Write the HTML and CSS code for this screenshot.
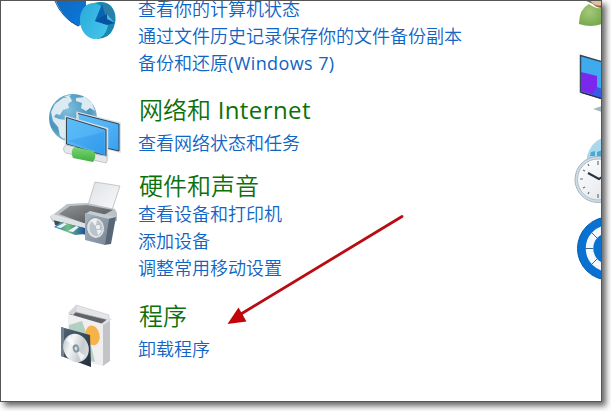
FILE: index.html
```html
<!DOCTYPE html>
<html lang="zh-CN">
<head>
    <meta charset="UTF-8">
    <title>控制面板</title>
    <link rel="stylesheet" href="styles.css">
</head>
<body>
    <div class="window">
        <div class="categories">
            <section class="category system">
                <svg class="icon" width="84" height="48" viewBox="44 -5 84 48">
                    <defs>
                        <linearGradient id="pie" x1="0" y1="0" x2="1" y2="1"><stop offset="0" stop-color="#1268bd"/><stop offset="1" stop-color="#0878dc"/></linearGradient>
                        <linearGradient id="disk" x1="0" y1="0" x2="1" y2="1"><stop offset="0" stop-color="#28a9d8"/><stop offset="1" stop-color="#48c7ed"/></linearGradient>
                    </defs>
                    <path d="M54-5Q61 17 78 25L86 18V-5Z" fill="url(#pie)"/>
                    <path d="M55 0Q62 17 78 25l3-2" fill="none" stroke="#0d529e"/>
                    <path d="M94 2Q105-1 111 5Q117 12 115 22Q113 34 103 37L97 38Z" fill="#1688b2"/>
                    <ellipse cx="94" cy="20" rx="14" ry="18" fill="url(#disk)" transform="rotate(-8 94 20)"/>
                    <path d="M95 20L102 3L107 7L106 23Z" fill="#0963b3"/>
                    <path d="M102 3Q112 3 115 19L106 17Z" fill="#2c7da7"/>
                    <path d="M95 20L107 13L115 22L107 24Z" fill="#0753a0"/>
                    <path d="M107 13L115 22L107 18Z" fill="#47b8dc"/>
                </svg>
                <ul class="links">
                    <li><a>查看你的计算机状态</a></li>
                    <li><a>通过文件历史记录保存你的文件备份副本</a></li>
                    <li><a>备份和还原<span class="latin">(Windows 7)</span></a></li>
                </ul>
            </section>

            <section class="category network">
                <svg class="icon" width="84" height="76" viewBox="44 91 84 76">
                    <defs>
                        <radialGradient id="globe" cx=".38" cy=".32" r=".72"><stop offset="0" stop-color="#7fc0de"/><stop offset=".65" stop-color="#4a94bd"/><stop offset="1" stop-color="#9cc2d5"/></radialGradient>
                        <linearGradient id="screen" x1="0" y1="0" x2="1" y2="1"><stop offset="0" stop-color="#5cbdf8"/><stop offset=".5" stop-color="#52b3f5"/><stop offset="1" stop-color="#38a0f0"/></linearGradient>
                        <linearGradient id="plug" x1="0" y1="0" x2="0" y2="1"><stop offset="0" stop-color="#7bd670"/><stop offset="1" stop-color="#3fae42"/></linearGradient>
                    </defs>
                    <circle cx="73" cy="118" r="24" fill="url(#globe)"/>
                    <path d="M51 112l4-8 8-6 7-1 2 4-4 3 1 4-6 2-3 5-4-1-2 3 5 2 7 1 4 5-2 8-4 6-4-3-2-9-5-6zM76 98l9-1 7 6 3 8-5-3-4 3-5-3 1-5-6-2zM64 96l7-1-3 3z" fill="#dcebf2"/>
                    <path d="M77.500 113L119.500 123.500V151.500L77.500 141Z" fill="url(#screen)" stroke="#d3dde3" stroke-width="2.500"/>
                    <path d="M78 113.500L119 124V151L102 147" fill="url(#screen)" stroke="#34444f"/>
                    <path d="M66 117L107 129V156.500L66 144Z" fill="url(#screen)" stroke="#d3dde3" stroke-width="2.500"/>
                    <path d="M66.500 117.500L106 129.500V156L66.500 144Z" fill="url(#screen)" stroke="#34444f"/>
                    <path d="M68 141L104 132V154Z" fill="#208ce3" opacity=".3"/>
                    <path d="M65.500 145l10 2-1 8-9-2q-4-4 0-8zM93 154l13 2q3 4 0 7l-13-3z" fill="#e4e7e9" stroke="#b7bdc1" stroke-width=".8"/>
                    <path d="M74 147l20 4q3 6-1 11l-20-4q-3-6 1-11z" fill="url(#plug)"/>
                </svg>
                <div>
                    <h2>网络和<span class="latin"> Internet</span></h2>
                    <ul class="links">
                        <li><a>查看网络状态和任务</a></li>
                    </ul>
                </div>
            </section>

            <section class="category hardware">
                <svg class="icon" width="84" height="72" viewBox="44 178 84 72">
                    <defs>
                        <linearGradient id="lid" x1="0" y1="0" x2="1" y2="1"><stop offset="0" stop-color="#929597"/><stop offset="1" stop-color="#4b4f52"/></linearGradient>
                        <linearGradient id="paper" x1="0" y1="0" x2="1" y2="1"><stop offset="0" stop-color="#dfe2e6"/><stop offset="1" stop-color="#f8f9fa"/></linearGradient>
                        <linearGradient id="box" x1="0" y1="0" x2="1" y2="1"><stop offset="0" stop-color="#a8b3bd"/><stop offset="1" stop-color="#788795"/></linearGradient>
                        <linearGradient id="photo"><stop offset="0" stop-color="#2478c7"/><stop offset=".45" stop-color="#75be81"/><stop offset="1" stop-color="#1c509f"/></linearGradient>
                    </defs>
                    <path d="M88 205l7-23 25 4-8 24z" fill="url(#paper)" stroke="#b6bcc2" stroke-width=".8"/>
                    <path d="M50 217l17-13 20-1 28 6 2 4v8l-31 9-33-8z" fill="#bbc1c5"/>
                    <path d="M59 214l11-8 17-1 26 5-27 14z" fill="url(#lid)"/>
                    <path d="M53 216l33 10v9l-31-10z" fill="#444b50"/>
                    <path d="M50 216l3-2 34 10v5l-34-9z" fill="#dfe2e4"/>
                    <path d="M54 227l7-5 24 6v6l-10 1z" fill="url(#photo)"/>
                    <path d="M56 227l8-4 3 1-6 4zM68 231l8-5 3 1-6 5z" fill="#e8f4fb"/>
                    <path d="M85 214l5-3 26 6-3 3z" fill="#c5cdd3"/>
                    <path d="M108 219l8-2-5 27-7 1z" fill="#586775"/>
                    <path d="M85 213l24 6-4 26-20-5z" fill="url(#box)"/>
                    <ellipse cx="95.500" cy="228" rx="9" ry="10.500" fill="#dce1e5" stroke="#8b969f" transform="rotate(-8 95 228)"/>
                    <ellipse cx="96" cy="228" rx="6.500" ry="8" fill="#bac3ca" transform="rotate(-8 96 228)"/>
                    <path d="M96 227l-5-7 6-1zM96 227l6 4-4 4z" fill="#edf0f2"/>
                    <circle cx="98" cy="227" r="2.700" fill="#edf0f2" stroke="#a5afb7" stroke-width=".7"/>
                </svg>
                <div>
                    <h2>硬件和声音</h2>
                    <ul class="links">
                        <li><a>查看设备和打印机</a></li>
                        <li><a>添加设备</a></li>
                        <li><a>调整常用移动设置</a></li>
                    </ul>
                </div>
            </section>

            <section class="category programs">
                <svg class="icon" width="84" height="74" viewBox="44 299 84 74">
                    <defs>
                        <linearGradient id="case" x1="0" y1="0" x2="1" y2="1"><stop offset="0" stop-color="#546575"/><stop offset="1" stop-color="#222e3b"/></linearGradient>
                        <linearGradient id="cd" x1="0" y1="0" x2="1" y2="1"><stop offset="0" stop-color="#aab3b9"/><stop offset=".35" stop-color="#f4f6f7"/><stop offset=".65" stop-color="#c5cccf"/><stop offset="1" stop-color="#e8ebed"/></linearGradient>
                    </defs>
                    <path d="M68 313l35 11v42l-35-8z" fill="#efeff0"/>
                    <path d="M103 324l7-4v41l-7 5z" fill="#c3c4c7"/>
                    <path d="M69 314l7-3 33 7-6 6z" fill="#606367"/>
                    <path d="M76 305l33 10v5l-33-8z" fill="#e4e5e7" stroke="#c8c9cc" stroke-width=".7"/>
                    <path d="M68 313l8-8v7l-3 3z" fill="#d3d5d7"/>
                    <path d="M101 324l8-6 3 1-8 6z" fill="#dedfe1"/>
                    <path d="M69 325l13-4 5 14-18 10zM88 333l7 29-5-1z" fill="#b3cfc1"/>
                    <ellipse cx="92.500" cy="335.500" rx="7" ry="10" fill="#f6b348" transform="rotate(-12 92 335)"/>
                    <path d="M61 327l29 8 1 32-30-11z" fill="url(#case)"/>
                    <path d="M61 327l3 1v29l-3-1z" fill="#718190"/>
                    <ellipse cx="76" cy="348" rx="12.500" ry="14.500" fill="url(#cd)" transform="rotate(-24 76 348)"/>
                    <path d="M76 348L66 340l4-5zM76 349l9 7-4 5z" fill="#fff" opacity=".7"/>
                    <ellipse cx="76" cy="348.500" rx="3.200" ry="4.200" fill="#8796a0" transform="rotate(-15 76 348.500)"/>
                    <ellipse cx="76" cy="348.500" rx="1.400" ry="2" fill="#d8dddf"/>
                </svg>
                <div>
                    <h2>程序</h2>
                    <ul class="links">
                        <li><a>卸载程序</a></li>
                    </ul>
                </div>
            </section>
        </div>

        <div class="side-icons">
            <svg class="accounts" width="31" height="27" viewBox="571 0 31 27">
                <defs>
                    <radialGradient id="user" cx=".45" cy=".35" r=".7"><stop offset="0" stop-color="#a4c978"/><stop offset="1" stop-color="#76a74d"/></radialGradient>
                </defs>
                <path d="M584 0h18v8q-6 0-9-4z" fill="#8d6a50"/>
                <path d="M579 24q0-15 10-20 6 5 13 4v16q-11 4-23 0z" fill="url(#user)"/>
                <path d="M590 0h12v5q-8 2-12-5z" fill="#e4bf9e"/>
            </svg>
            <svg class="display" width="31" height="60" viewBox="571 53 31 60">
                <path d="M580.500 55.500L603 62v37l-22.500-7z" fill="#3fabee" stroke="#30495e" stroke-width="1.500"/>
                <path d="M581 72l16 4v20l-16-5z" fill="#7b27ed"/>
                <path d="M592 95l5-8 5 2v9z" fill="#365ce6"/>
                <path d="M581 92l21 6v1l-21-6z" fill="#2c2450"/>
                <path d="M593 109l9-3v6z" fill="#a7b7c2"/>
            </svg>
            <svg class="clock" width="31" height="67" viewBox="571 136 31 67">
                <defs>
                    <linearGradient id="dial" x1="0" y1="0" x2="1" y2="1"><stop offset="0" stop-color="#fff"/><stop offset="1" stop-color="#dfe3e8"/></linearGradient>
                </defs>
                <path d="M587 156q4-14 15-18v22h-15z" fill="#a8daec"/>
                <path d="M591 152l4-1v5h-5zM597 152l5-2v7h-5z" fill="#4aa9d4"/>
                <circle cx="598" cy="179.500" r="23" fill="#cfdde5" stroke="#a5b7c2"/>
                <circle cx="598" cy="179.500" r="20.500" fill="url(#dial)" stroke="#b3bec8"/>
                <path d="M598 161v4M580 179h3M598 194v4M588 164l1 2M583 170l2 1M583 188l2-1M588 194l1-2" stroke="#68727c" stroke-width="1.200"/>
                <path d="M588 173l11 6 3-2" fill="none" stroke="#28323d" stroke-width="2"/>
            </svg>
            <svg class="access" width="31" height="65" viewBox="571 216 31 65">
                <circle cx="609" cy="248.500" r="31.500" fill="#0871d1" stroke="#075ba8"/>
                <circle cx="609" cy="248.500" r="19.500" fill="none" stroke="#f4f8fc" stroke-width="7.500"/>
                <path d="M585 248.500h8M592 233l6 6M592 264l6-6" stroke="#386c9c"/>
            </svg>
        </div>

        <!-- pointer towards the uninstall link -->
        <svg class="arrow" width="180" height="114" viewBox="226 213 180 114">
            <path d="M403 216.500L242 314" stroke="#b90c12" stroke-width="2.800" stroke-linecap="round"/>
            <path d="M228.500 324L239.500 307.500L247.500 321.500Z" fill="#c20508"/>
        </svg>
    </div>
</body>
</html>
```
FILE: styles.css
```css
html,
body {
    height: 411px;
}
body {
    margin: 0;
    background-color: #fff;
    font-family: "Open Sans", "Noto Sans CJK SC", sans-serif;
}
.window {
    position: relative;
    box-sizing: border-box;
    display: flex;
    justify-content: space-between;
    width: 602px;
    height: 402px;
    overflow: hidden;
    border: 1px solid #555;
    background-color: #fff;
    box-shadow: 4px 4px 6px rgba(0, 0, 0, 0.6);
}
.categories {
    flex: 1;
    margin-top: -5px;
}
.category {
    display: grid;
    grid-template-columns: 94px 1fr;
    padding-left: 43px;
}
.icon {
    display: block;
}
.system {
    height: 98px;
}
.network {
    height: 76px;
}
.network .icon {
    margin-top: -3px;
}
.hardware {
    height: 130px;
}
.hardware .icon {
    margin-top: 8px;
}
.programs .icon {
    margin-top: -1px;
}
h2 {
    margin: 0 0 0 1px;
    color: #0c700c;
    font-size: 24px;
    font-weight: 350;
    line-height: 32px;
}
.links {
    margin: 0;
    padding: 0;
    list-style: none;
    color: #0f64c4;
    font-size: 18px;
    font-weight: 350;
    line-height: 27px;
    white-space: nowrap;
}
.network .links,
.programs .links {
    margin-top: 4px;
}
.hardware .links {
    margin-top: -1px;
}
.latin {
    font-weight: 400;
    letter-spacing: 0.4px;
}
.side-icons {
    display: flex;
    flex-direction: column;
    width: 30px;
    margin-top: -1px;
}
.side-icons svg {
    flex-shrink: 0;
}
.display {
    margin-top: 26px;
}
.clock {
    margin-top: 23px;
}
.access {
    margin-top: 13px;
}
.arrow {
    position: absolute;
    left: 224px;
    top: 212px;
}
```
